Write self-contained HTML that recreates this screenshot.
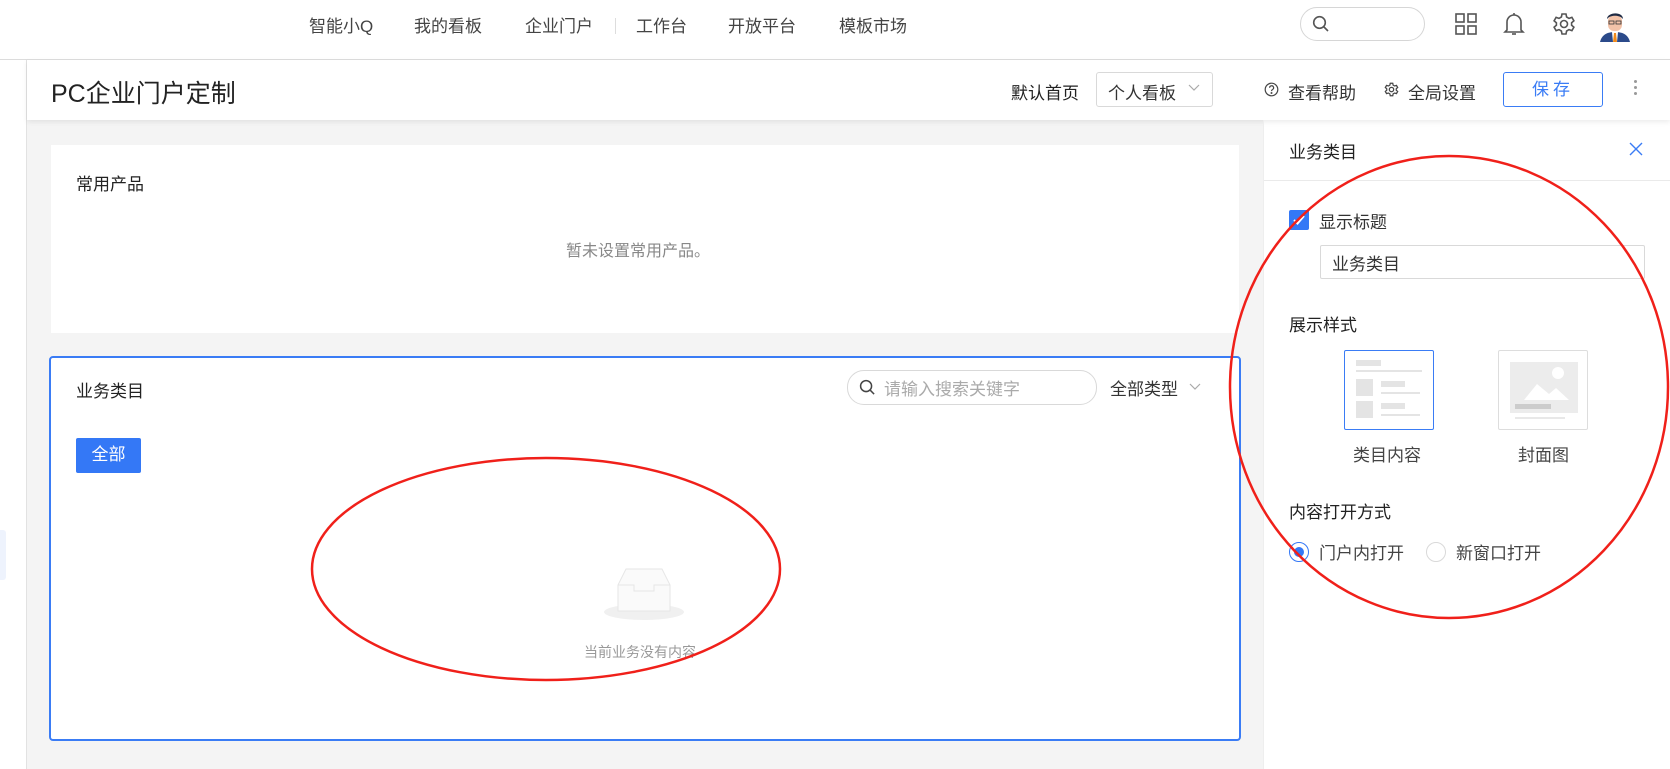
<!DOCTYPE html>
<html><head><meta charset="utf-8"><style>
*{margin:0;padding:0;box-sizing:border-box}
body{width:1670px;height:769px;position:relative;overflow:hidden;background:#fff;font-family:"Liberation Sans","Noto Sans CJK SC",sans-serif;color:#333}
.a{position:absolute;white-space:nowrap}
.nav{font-size:17px;color:#444;top:12px}
</style></head><body>
<div class="a" style="left:0;top:0;width:1670px;height:60px;border-bottom:1px solid #dcdcdc;background:#fff"></div>
<div class="a nav" style="left:309px">智能小Q</div>
<div class="a nav" style="left:414px">我的看板</div>
<div class="a nav" style="left:525px">企业门户</div>
<div class="a" style="left:615px;top:18px;width:1px;height:16px;background:#ddd"></div>
<div class="a nav" style="left:636px">工作台</div>
<div class="a nav" style="left:728px">开放平台</div>
<div class="a nav" style="left:839px">模板市场</div>
<div class="a" style="left:1300px;top:7px;width:125px;height:34px;border:1px solid #d6d6d6;border-radius:17px"></div>
<svg class="a" style="left:1312px;top:15px" width="18" height="18" viewBox="0 0 18 18" fill="none" stroke="#555" stroke-width="1.6"><circle cx="7.5" cy="7.5" r="5.8"/><path d="M12 12l4 4"/></svg>
<svg class="a" style="left:1455px;top:13px" width="22" height="22" viewBox="0 0 22 22" fill="none" stroke="#555" stroke-width="1.6"><rect x="1" y="1" width="8" height="8"/><rect x="13" y="1" width="8" height="8"/><rect x="1" y="13" width="8" height="8"/><rect x="13" y="13" width="8" height="8"/></svg>
<svg class="a" style="left:1503px;top:11px" width="22" height="26" viewBox="0 0 22 26" fill="none" stroke="#555" stroke-width="1.6"><path d="M4 19V11a7 7 0 0114 0v8l2 2H2z"/><path d="M9 23h4"/><path d="M11 2v2"/></svg>
<svg class="a" style="left:1552px;top:12px" width="24" height="24" viewBox="0 0 24 24" fill="none" stroke="#555" stroke-width="1.6"><path d="M10 2h4l.6 3 2.4 1.4 2.9-1 2 3.4-2.3 2v2.4l2.3 2-2 3.4-2.9-1L14.6 19 14 22h-4l-.6-3L7 17.6l-2.9 1-2-3.4 2.3-2v-2.4l-2.3-2 2-3.4 2.9 1L9.4 5z"/><circle cx="12" cy="12" r="3.5"/></svg>
<svg class="a" style="left:1598px;top:8px" width="34" height="34" viewBox="0 0 34 34"><path d="M2 34c2-8 8-10 15-10s13 2 15 10z" fill="#2b4a8a"/><path d="M14 24h6l-1 10h-4z" fill="#fff"/><path d="M16 25h2l1 9h-4z" fill="#f08a1c"/><rect x="10" y="7" width="14" height="16" rx="6" fill="#f3c3a9"/><path d="M9 11c0-7 16-8 16 0l-1-1c-3-3-11-3-14 0z" fill="#1f2b44"/><rect x="11" y="13" width="5" height="3" fill="none" stroke="#333" stroke-width=".8"/><rect x="18" y="13" width="5" height="3" fill="none" stroke="#333" stroke-width=".8"/></svg>

<div class="a" style="left:26px;top:60px;width:1px;height:709px;background:#e2e2e2"></div>
<div class="a" style="left:0;top:530px;width:6px;height:50px;background:#eef3fd;border-radius:0 3px 3px 0"></div>

<div class="a" style="left:27px;top:120px;width:1236px;height:649px;background:#f4f4f4"></div>
<div class="a" style="left:27px;top:60px;width:1643px;height:60px;background:#fff;box-shadow:0 2px 5px rgba(0,0,0,.08)"></div>
<div class="a" style="left:51px;top:74px;font-size:25px;color:#222">PC企业门户定制</div>
<div class="a" style="left:1011px;top:79px;font-size:17px;color:#222">默认首页</div>
<div class="a" style="left:1096px;top:72px;width:117px;height:35px;border:1px solid #d9d9d9;border-radius:3px"></div>
<div class="a" style="left:1108px;top:79px;font-size:17px;color:#333">个人看板</div>
<svg class="a" style="left:1188px;top:84px" width="12" height="8" viewBox="0 0 12 8" fill="none" stroke="#aaa" stroke-width="1.2"><path d="M1 1l5 5 5-5"/></svg>
<svg class="a" style="left:1264px;top:82px" width="15" height="15" viewBox="0 0 15 15" fill="none" stroke="#444" stroke-width="1.2"><circle cx="7.5" cy="7.5" r="6.3"/><path d="M5.6 5.8a2 2 0 113 1.7c-.8.4-1.1.8-1.1 1.6"/><circle cx="7.5" cy="11" r=".4" fill="#444"/></svg>
<div class="a" style="left:1288px;top:79px;font-size:17px;color:#333">查看帮助</div>
<svg class="a" style="left:1384px;top:82px" width="15" height="15" viewBox="0 0 24 24" fill="none" stroke="#444" stroke-width="2"><path d="M10 2h4l.6 3 2.4 1.4 2.9-1 2 3.4-2.3 2v2.4l2.3 2-2 3.4-2.9-1L14.6 19 14 22h-4l-.6-3L7 17.6l-2.9 1-2-3.4 2.3-2v-2.4l-2.3-2 2-3.4 2.9 1L9.4 5z"/><circle cx="12" cy="12" r="3.5"/></svg>
<div class="a" style="left:1408px;top:79px;font-size:17px;color:#333">全局设置</div>
<div class="a" style="left:1503px;top:72px;width:100px;height:35px;border:1px solid #3a7cf5;border-radius:3px;color:#3a7cf5;font-size:17px;text-align:center;line-height:33px;letter-spacing:4px">保存</div>
<div class="a" style="left:1634px;top:80px;width:3px;height:3px;background:#999;border-radius:2px;box-shadow:0 6px 0 #999,0 12px 0 #999"></div>

<div class="a" style="left:51px;top:145px;width:1188px;height:188px;background:#fff"></div>
<div class="a" style="left:76px;top:170px;font-size:17px;color:#222">常用产品</div>
<div class="a" style="left:566px;top:237px;font-size:16px;color:#888">暂未设置常用产品。</div>

<div class="a" style="left:49px;top:356px;width:1192px;height:385px;background:#fff;border:2px solid #3a7cf5;border-radius:4px"></div>
<div class="a" style="left:76px;top:377px;font-size:17px;color:#222">业务类目</div>
<div class="a" style="left:847px;top:370px;width:250px;height:35px;border:1px solid #d9d9d9;border-radius:17px"></div>
<svg class="a" style="left:859px;top:379px" width="17" height="17" viewBox="0 0 18 18" fill="none" stroke="#444" stroke-width="1.6"><circle cx="7.5" cy="7.5" r="5.8"/><path d="M12 12l4 4"/></svg>
<div class="a" style="left:884px;top:375px;font-size:17px;color:#aaa">请输入搜索关键字</div>
<div class="a" style="left:1110px;top:375px;font-size:17px;color:#333">全部类型</div>
<svg class="a" style="left:1189px;top:383px" width="12" height="8" viewBox="0 0 12 8" fill="none" stroke="#aaa" stroke-width="1.2"><path d="M1 1l5 5 5-5"/></svg>
<div class="a" style="left:76px;top:438px;width:65px;height:35px;background:#3478f6;border-radius:2px;color:#fff;font-size:17px;text-align:center;line-height:34px">全部</div>
<svg class="a" style="left:602px;top:565px" width="84" height="60" viewBox="0 0 84 60"><ellipse cx="42" cy="47" rx="40" ry="8" fill="#f0f0f0"/><path d="M16 20l8-16h36l8 16v26H16z" fill="#fafafa" stroke="#e6e6e6"/><path d="M16 20h16v6h20v-6h16" fill="none" stroke="#e6e6e6"/></svg>
<div class="a" style="left:584px;top:642px;font-size:14px;color:#999">当前业务没有内容</div>

<div class="a" style="left:1263px;top:120px;width:1px;height:649px;background:#eee"></div>
<div class="a" style="left:1289px;top:138px;font-size:17px;color:#222">业务类目</div>
<svg class="a" style="left:1629px;top:142px" width="14" height="14" viewBox="0 0 14 14" stroke="#3a7cf5" stroke-width="1.4"><path d="M1 1l12 12M13 1L1 13"/></svg>
<div class="a" style="left:1264px;top:180px;width:406px;height:1px;background:#eaeaea"></div>
<div class="a" style="left:1289px;top:210px;width:20px;height:20px;background:#3478f6;border-radius:2px"></div>
<svg class="a" style="left:1292px;top:213px" width="14" height="14" viewBox="0 0 14 14" fill="none" stroke="#fff" stroke-width="2"><path d="M2 7l3.5 3.5L12 3"/></svg>
<div class="a" style="left:1319px;top:208px;font-size:17px;color:#333">显示标题</div>
<div class="a" style="left:1320px;top:245px;width:325px;height:34px;border:1px solid #d9d9d9;border-radius:2px"></div>
<div class="a" style="left:1332px;top:250px;font-size:17px;color:#333">业务类目</div>
<div class="a" style="left:1289px;top:311px;font-size:17px;color:#222">展示样式</div>
<div class="a" style="left:1344px;top:350px;width:90px;height:80px;border:1px solid #3a7cf5;border-radius:2px"></div>
<svg class="a" style="left:1350px;top:356px" width="78" height="66" viewBox="0 0 78 66" fill="#e4e4e4"><rect x="6" y="4" width="25" height="6"/><rect x="6" y="14" width="66" height="2"/><rect x="6" y="23" width="17" height="17"/><rect x="31" y="25" width="24" height="6"/><rect x="31" y="36" width="39" height="2"/><rect x="6" y="45" width="17" height="17"/><rect x="31" y="47" width="24" height="6"/><rect x="31" y="58" width="39" height="2"/></svg>
<div class="a" style="left:1498px;top:350px;width:90px;height:80px;border:1px solid #ddd;border-radius:2px"></div>
<svg class="a" style="left:1504px;top:356px" width="78" height="66" viewBox="0 0 78 66"><rect x="6" y="6" width="68" height="51" fill="#ececec"/><path d="M20 44l13-16 12 10 7-6 13 12z" fill="#fff"/><circle cx="54" cy="17" r="6" fill="#fff"/><rect x="11" y="48" width="36" height="5" fill="#ccc"/><rect x="11" y="61" width="50" height="2" fill="#e8e8e8"/></svg>
<div class="a" style="left:1353px;top:441px;font-size:17px;color:#444">类目内容</div>
<div class="a" style="left:1518px;top:441px;font-size:17px;color:#444">封面图</div>
<div class="a" style="left:1289px;top:498px;font-size:17px;color:#222">内容打开方式</div>
<div class="a" style="left:1289px;top:542px;width:20px;height:20px;border:1px solid #3478f6;border-radius:50%"></div>
<div class="a" style="left:1294px;top:547px;width:10px;height:10px;background:#3478f6;border-radius:50%"></div>
<div class="a" style="left:1319px;top:539px;font-size:17px;color:#444">门户内打开</div>
<div class="a" style="left:1426px;top:542px;width:20px;height:20px;border:1px solid #d9d9d9;border-radius:50%"></div>
<div class="a" style="left:1456px;top:539px;font-size:17px;color:#444">新窗口打开</div>

<svg class="a" style="left:0;top:0" width="1670" height="769" fill="none" stroke="#f0201a" stroke-width="2.5"><ellipse cx="546" cy="569" rx="234" ry="111"/><ellipse cx="1449" cy="387" rx="219" ry="231"/></svg>
</body></html>
